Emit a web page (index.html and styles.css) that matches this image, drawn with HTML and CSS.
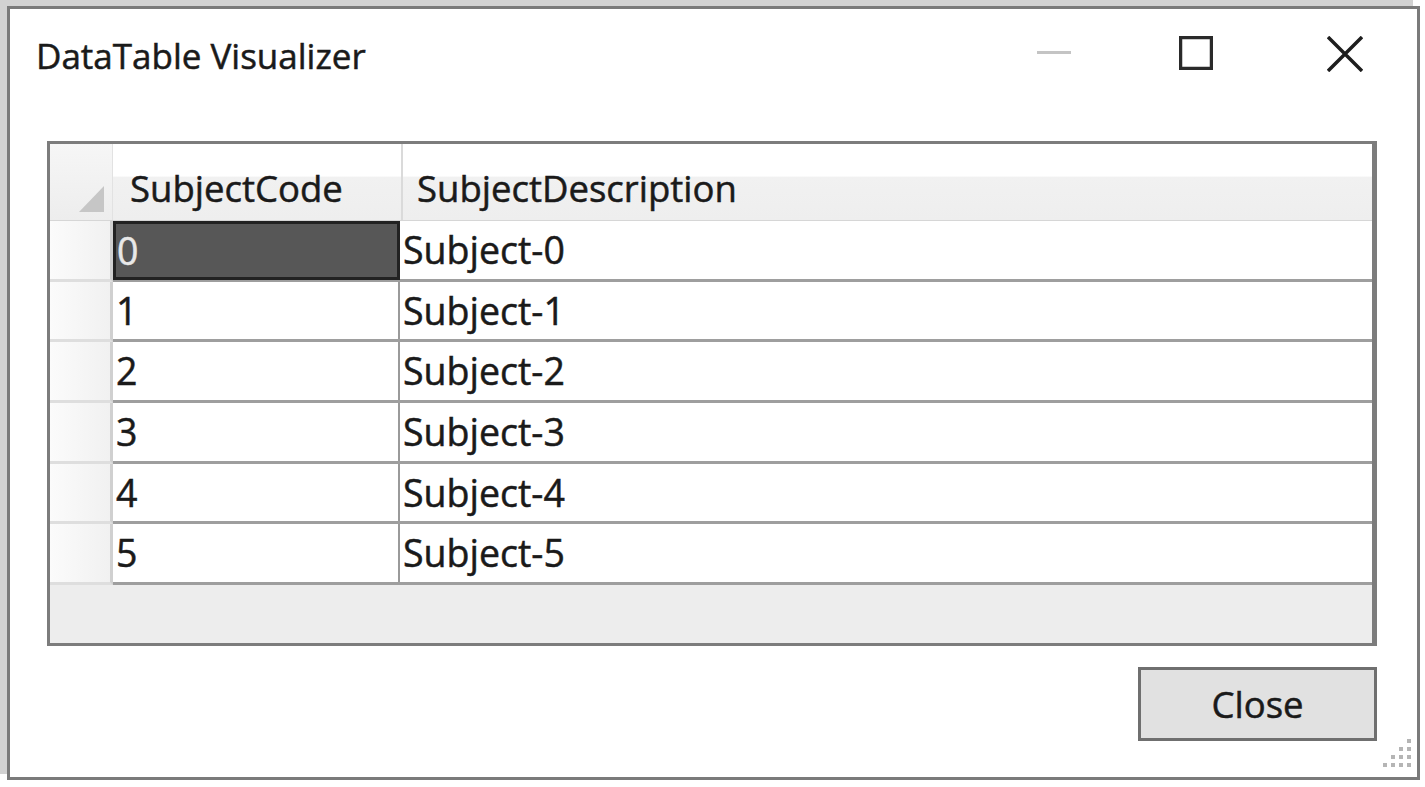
FILE: index.html
```html
<!DOCTYPE html>
<html>
<head>
<meta charset="utf-8">
<title>DataTable Visualizer</title>
<link rel="stylesheet" href="styles.css">
</head>
<body>
<div class="window">
  <div class="titlebar">
    <div class="title">DataTable Visualizer</div>
    <div class="controls">
      <div class="ctl ctl-min"><svg width="34" height="34" viewBox="0 0 34 34"><rect x="0" y="15" width="34" height="3" fill="#c4c4c4"/></svg></div>
      <div class="ctl ctl-max"><svg width="34" height="34" viewBox="0 0 34 34"><rect x="1.5" y="1.5" width="31" height="31" fill="none" stroke="#2a2a2a" stroke-width="3.5"/></svg></div>
      <div class="ctl ctl-close"><svg width="36" height="36" viewBox="0 0 36 36"><path d="M1 1 L35 35 M35 1 L1 35" stroke="#1e1e1e" stroke-width="3.5" fill="none"/></svg></div>
    </div>
  </div>
  <div class="content">
    <div class="grid">
      <div class="hrow">
        <div class="corner"><span class="tri"></span></div>
        <div class="hcell c1">SubjectCode</div>
        <div class="hcell c2">SubjectDescription</div>
      </div>
      <div class="rows">
        <div class="row">
          <div class="rh"></div>
          <div class="cell c1 sel">0</div>
          <div class="cell c2">Subject-0</div>
        </div>
        <div class="row">
          <div class="rh"></div>
          <div class="cell c1">1</div>
          <div class="cell c2">Subject-1</div>
        </div>
        <div class="row">
          <div class="rh"></div>
          <div class="cell c1">2</div>
          <div class="cell c2">Subject-2</div>
        </div>
        <div class="row">
          <div class="rh"></div>
          <div class="cell c1">3</div>
          <div class="cell c2">Subject-3</div>
        </div>
        <div class="row">
          <div class="rh"></div>
          <div class="cell c1">4</div>
          <div class="cell c2">Subject-4</div>
        </div>
        <div class="row">
          <div class="rh"></div>
          <div class="cell c1">5</div>
          <div class="cell c2">Subject-5</div>
        </div>
      </div>
      <div class="empty"></div>
    </div>
    <div class="footer">
      <button class="btn">Close</button>
    </div>
  </div>
  <div class="grip">
    <svg width="40" height="40" viewBox="0 0 40 40">
      <g fill="#b5b5b5">
        <rect x="32" y="4" width="4" height="4"/>
        <rect x="24" y="12" width="4" height="4"/><rect x="32" y="12" width="4" height="4"/>
        <rect x="16" y="20" width="4" height="4"/><rect x="24" y="20" width="4" height="4"/><rect x="32" y="20" width="4" height="4"/>
        <rect x="8" y="28" width="4" height="4"/><rect x="16" y="28" width="4" height="4"/><rect x="24" y="28" width="4" height="4"/><rect x="32" y="28" width="4" height="4"/>
      </g>
    </svg>
  </div>
</div>
</body>
</html>
```

FILE: styles.css
```css
html, body {
  margin: 0;
  padding: 0;
}
body {
  width: 1425px;
  height: 787px;
  background: #ffffff;
  font-family: "Open Sans", "Noto Sans", sans-serif;
  color: #1e1e1e;
  overflow: hidden;
}
.window {
  position: relative;
  box-sizing: border-box;
  margin: 6px 0 0 7px;
  width: 1413px;
  height: 774px;
  border: 3px solid #7a7a7a;
  background: #ffffff;
  box-shadow: -7px -6px 0 0 #d2d2d2;
  display: flex;
  flex-direction: column;
}
.titlebar {
  height: 96px;
  display: flex;
  align-items: flex-start;
  justify-content: space-between;
}
.title {
  margin: 27px 0 0 26px;
  font-size: 35px;
  line-height: 40px;
  color: #1a1a1a;
  -webkit-text-stroke: 0.5px #1a1a1a;
}
.controls {
  display: flex;
  align-items: flex-start;
  margin-top: 27px;
}
.ctl {
  display: flex;
}
.ctl-min { margin-right: 108px; }
.ctl-max { margin-right: 114px; }
.ctl-close { margin-right: 54px; }

.content {
  flex: 1;
  display: flex;
  flex-direction: column;
  padding: 36px 40px 0 37px;
}
.grid {
  box-sizing: border-box;
  width: 1330px;
  height: 505px;
  border: 3px solid #7c7c7c;
  border-right-width: 5px;
  background: #ececec;
  display: flex;
  flex-direction: column;
}
.hrow {
  display: flex;
  height: 77px;
  flex: none;
  background: linear-gradient(#ffffff 0, #ffffff 42%, #f1f1f1 44%, #eeeeee 100%);
  border-bottom: 1px solid #d6d6d6;
  box-sizing: border-box;
}
.corner {
  position: relative;
  width: 63px;
  flex: none;
  border-right: 1px solid #e2e2e2;
  box-sizing: border-box;
  background: linear-gradient(#f6f6f6, #ededed);
}
.tri {
  position: absolute;
  right: 8px;
  bottom: 8px;
  width: 0;
  height: 0;
  border-left: 25px solid transparent;
  border-bottom: 26px solid #c6c6c6;
}
.hcell {
  box-sizing: border-box;
  font-size: 36.5px;
  line-height: 76px;
  padding-top: 6px;
  color: #1a1a1a;
  -webkit-text-stroke: 0.5px #1a1a1a;
}
.hcell.c1 {
  width: 290px;
  padding-left: 17px;
  border-right: 2px solid #dadada;
}
.hcell.c2 {
  flex: 1;
  padding-left: 14px;
}
.rows {
  flex: none;
  display: flex;
  flex-direction: column;
}
.row {
  display: flex;
  height: 60.7px;
  box-sizing: border-box;
  border-bottom: 3px solid #9e9e9e;
}
.rh {
  width: 63px;
  flex: none;
  box-sizing: border-box;
  background: linear-gradient(90deg, #fbfbfb 0, #f7f7f7 40%, #f1f1f1 100%);
  border-right: 3px solid #d0d0d0;
  margin-bottom: -3px;
  border-bottom: 3px solid #dedede;
}
.cell {
  box-sizing: border-box;
  background: #ffffff;
  font-size: 37.5px;
  line-height: 57px;
  color: #1a1a1a;
  -webkit-text-stroke: 0.5px #1a1a1a;
  padding-left: 3px;
}
.cell.c1 {
  width: 287px;
  border-right: 2px solid #9a9a9a;
}
.cell.c2 {
  flex: 1;
}
.cell.sel {
  background: #575757;
  color: #e8e8e8;
  -webkit-text-stroke: 0.5px #e8e8e8;
  border: 3px solid #222222;
  line-height: 53px;
  padding-left: 1px;
  margin-bottom: -1px;
}
.empty {
  flex: 1;
  background: #ededed;
}
.footer {
  display: flex;
  justify-content: flex-end;
  padding-top: 21px;
}
.btn {
  box-sizing: border-box;
  width: 239px;
  height: 74px;
  background: #e1e1e1;
  border: 3px solid #6f6f6f;
  font-family: "Open Sans", "Noto Sans", sans-serif;
  font-size: 36.5px;
  color: #1a1a1a;
  -webkit-text-stroke: 0.5px #1a1a1a;
  padding: 0;
}
.grip {
  position: absolute;
  right: 2px;
  bottom: 2px;
  display: flex;
}
```
